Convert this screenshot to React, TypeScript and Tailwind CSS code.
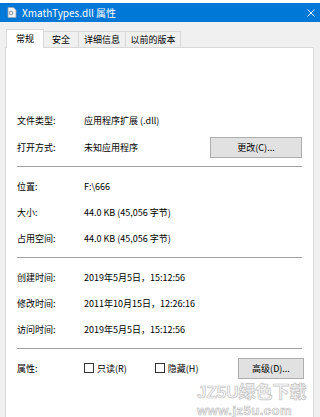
import React from 'react';

const Row: React.FC<{ label: string; children?: React.ReactNode; className?: string }> = ({ label, children, className }) => (
  <div className={`flex items-center h-[26px] ${className ?? ''}`}>
    <div className="w-[67px] shrink-0">{label}</div>
    <div className="flex-1 flex items-center">{children}</div>
  </div>
);

const Sep: React.FC = () => <div className="h-px bg-[#a0a0a0] my-[6px]" />;

const Checkbox: React.FC<{ label: string }> = ({ label }) => (
  <div className="flex items-center gap-[3px]">
    <span className="w-[10px] h-[10px] border border-[#333] bg-white" />
    <span>{label}</span>
  </div>
);

const App: React.FC = () => {
  return (
    <div
      className="relative w-[320px] h-[417px] overflow-hidden bg-[#f0f0f0] text-black text-[9px] leading-none"
      style={{ fontFamily: '"Noto Sans CJK SC", "Noto Sans", sans-serif' }}
    >
      <div className="h-[3px] bg-white" />
      {/* Title bar */}
      <div className="h-[19px] bg-[#0078d7] flex items-center pl-[7px] pr-[5px] text-white">
        <svg width="10" height="11" viewBox="0 0 10 11" className="shrink-0">
          <path d="M1 0.5h5.5l2.5 2.5v7.5h-8z" fill="#f4f4f4" stroke="#9aa4ad" strokeWidth="0.8" />
          <circle cx="4" cy="6" r="1.8" fill="none" stroke="#7a8793" strokeWidth="0.9" />
        </svg>
        <span className="ml-[5px] text-[10px]">XmathTypes.dll 属性</span>
        <svg width="8" height="8" viewBox="0 0 8 8" className="ml-auto">
          <path d="M0.5 0.5l7 7M7.5 0.5l-7 7" stroke="white" strokeWidth="0.9" />
        </svg>
      </div>
      <div className="h-[7px]" />
      {/* Tabs */}
      <div className="flex items-end h-[19px] pl-[6px] relative z-10">
        <div className="h-[19px] w-[38px] bg-white border border-b-0 border-[#d9d9d9] flex items-center justify-center pb-[2px]">常规</div>
        <div className="h-[17px] w-[35px] bg-[#f0f0f0] border border-l-0 border-[#d9d9d9] flex items-center justify-center">安全</div>
        <div className="h-[17px] w-[47px] bg-[#f0f0f0] border border-l-0 border-[#d9d9d9] flex items-center justify-center">详细信息</div>
        <div className="h-[17px] w-[55px] bg-[#f0f0f0] border border-l-0 border-[#d9d9d9] flex items-center justify-center">以前的版本</div>
      </div>
      {/* Panel */}
      <div className="ml-[5px] mr-[6px] h-[400px] -mt-px bg-white border border-[#d9d9d9] px-[11px] pt-[59px]">
        <Row label="文件类型:">应用程序扩展 (.dll)</Row>
        <Row label="打开方式:" className="mt-px">
          <span>未知应用程序</span>
          <button className="ml-auto w-[92px] h-[21px] bg-[#e1e1e1] border border-[#adadad] text-[9px]">更改(C)...</button>
        </Row>
        <Sep />
        <Row label="位置:">F:\666</Row>
        <Row label="大小:">44.0 KB (45,056 字节)</Row>
        <Row label="占用空间:">44.0 KB (45,056 字节)</Row>
        <Sep />
        <Row label="创建时间:">2019年5月5日，15:12:56</Row>
        <Row label="修改时间:">2011年10月15日，12:26:16</Row>
        <Row label="访问时间:">2019年5月5日，15:12:56</Row>
        <Sep />
        <Row label="属性:">
          <Checkbox label="只读(R)" />
          <div className="ml-[28px]">
            <Checkbox label="隐藏(H)" />
          </div>
          <button className="ml-auto -mr-[2px] w-[66px] h-[21px] bg-[#e1e1e1] border border-[#adadad] text-[9px]">高级(D)...</button>
        </Row>
      </div>
      {/* Watermark */}
      <div className="absolute left-[197px] top-[384px] whitespace-nowrap text-[#f6f6f6] [-webkit-text-stroke:0.7px_#c4c4c4] font-bold leading-none">
        <div className="text-[17px]" style={{ fontFamily: '"Liberation Sans", "Noto Sans CJK SC", sans-serif' }}>JZ5U绿色下载</div>
        <div className="mt-[3px] text-[13px] tracking-[0.5px]" style={{ fontFamily: '"Liberation Sans", sans-serif' }}>www.jz5u.com</div>
      </div>
    </div>
  );
};

export default App;
